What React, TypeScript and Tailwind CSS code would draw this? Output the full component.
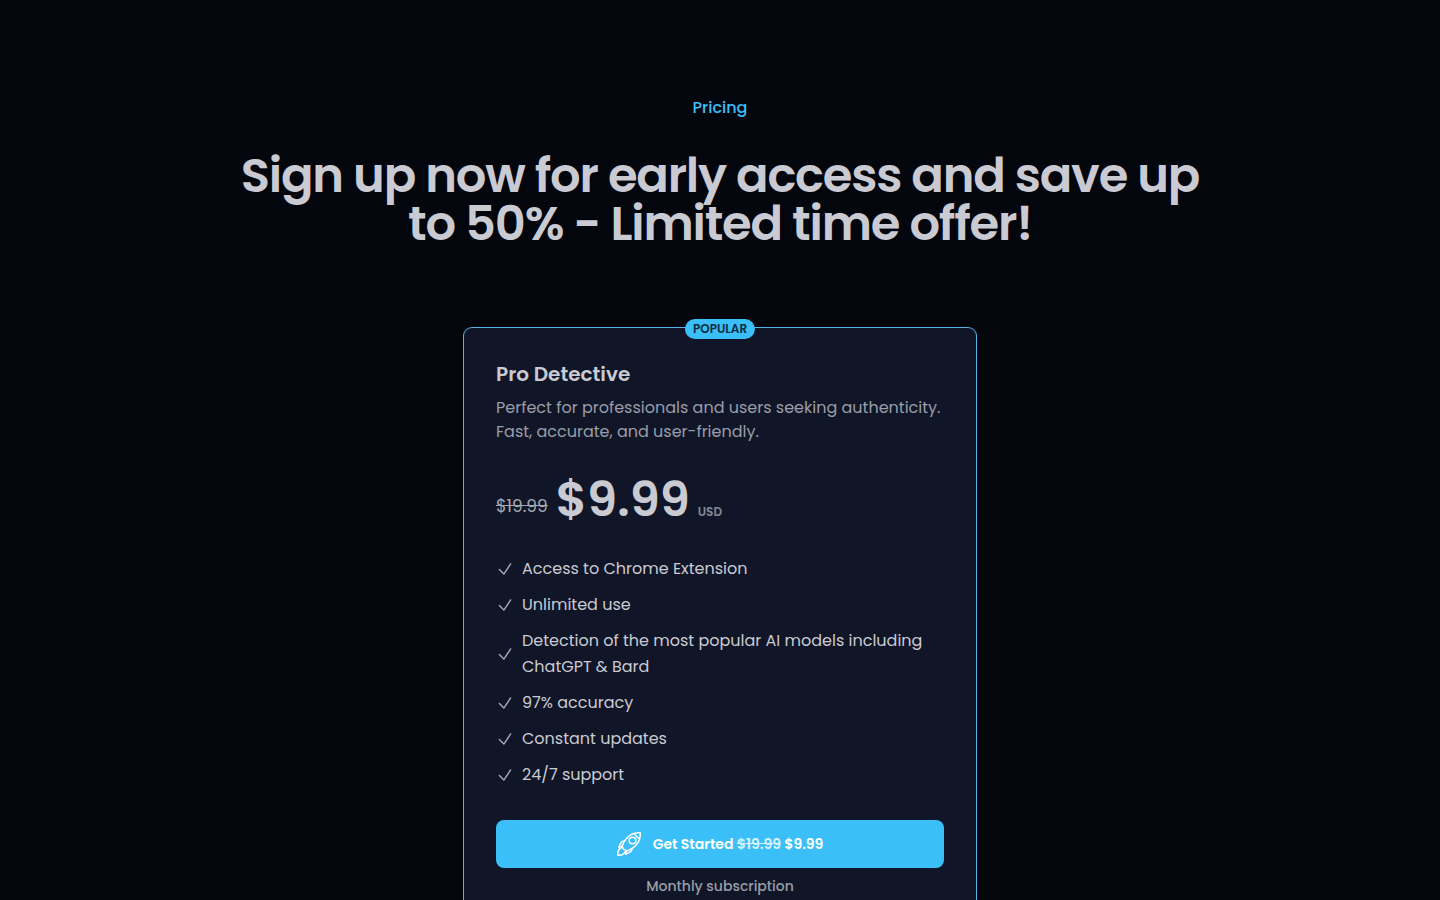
const features: string[] = [
  "Access to Chrome Extension",
  "Unlimited use",
  "Detection of the most popular AI models including ChatGPT & Bard",
  "97% accuracy",
  "Constant updates",
  "24/7 support",
];

function CheckIcon() {
  return (
    <svg
      className="size-[18px] shrink-0 text-[#a5a8b1]"
      viewBox="0 0 24 24"
      fill="none"
      stroke="currentColor"
      strokeWidth="1.9"
      strokeLinecap="round"
      strokeLinejoin="round"
      aria-hidden="true"
    >
      <path d="M4.500 12.750l6 6 9-13.500" />
    </svg>
  );
}

function RocketIcon() {
  return (
    <svg
      className="size-6 shrink-0"
      viewBox="0 0 24 24"
      fill="none"
      stroke="currentColor"
      strokeWidth="1.5"
      strokeLinecap="round"
      strokeLinejoin="round"
      aria-hidden="true"
    >
      <path d="M23.2.8C18.2.4 13.8 2 10.300 5.500C7.800 8 6 11 5.100 14.200C5.600 16.400 7.600 18.400 9.800 18.900C13 18 16 16.200 18.500 13.700C22 10.200 23.600 5.800 23.200.8Z" />
      <path d="M17.300 1.700C18.600 4 20 5.400 22.300 6.700" />
      <circle cx="15.500" cy="8.500" r="3.300" />
      <path d="M7.800 8.500L4.300 10.200L1.700 15.400L5.400 14.200" />
      <path d="M15.500 16.200L13.800 19.700L8.600 22.300L9.800 18.600" />
      <path d="M4.300 15.800C1.500 16.800.6 19.400.8 23.200C4.600 23.400 7.200 22.500 8.200 19.700" />
    </svg>
  );
}

export default function App() {
  return (
    <main className="min-h-screen bg-[#04060e] font-['Poppins','Inter',sans-serif] text-[#cacad2]">
      <section id="pricing" className="mx-auto max-w-5xl px-6 py-24">
        <div className="mb-20 flex flex-col gap-8 text-center">
          <p className="text-base font-medium text-[#3abff8]">Pricing</p>
          <h2 className="text-5xl leading-12 font-semibold tracking-tight">
            Sign up now for early access and save up to 50% - Limited time offer!
          </h2>
        </div>

        <article className="relative mx-auto max-w-lg rounded-lg bg-[#101627] p-8 ring-1 ring-[#55b5e6]">
          <span className="absolute top-0 left-1/2 flex h-5 -translate-x-1/2 -translate-y-[9px] items-center rounded-full bg-[#3abff8] px-2 text-xs font-semibold text-[#0b2e3f]">
            POPULAR
          </span>

          <h3 className="text-xl leading-7 font-semibold">Pro Detective</h3>
          <p className="mt-2 text-base leading-6 text-[#9a9da7]">
            Perfect for professionals and users seeking authenticity. Fast, accurate, and
            user-friendly.
          </p>

          <div className="mt-8 flex items-end gap-2">
            <s className="mb-1 text-[17px] leading-7 text-[#a5a8b1]">$19.99</s>
            <span className="text-5xl leading-12 font-semibold">$9.99</span>
            <span className="mb-1 text-xs leading-4 font-semibold text-[#858892]">USD</span>
          </div>

          <ul className="mt-8 flex flex-col gap-[10px] text-base leading-[26px]">
            {features.map((feature) => (
              <li key={feature} className="flex items-center gap-2">
                <CheckIcon />
                <span>{feature}</span>
              </li>
            ))}
          </ul>

          <button
            type="button"
            className="mt-8 flex h-12 w-full items-center justify-center gap-3 rounded-lg bg-[#3abff8] text-sm font-semibold text-white"
          >
            <RocketIcon />
            <span>
              Get Started <s className="opacity-80">$19.99</s> $9.99
            </span>
          </button>
          <p className="mt-2 text-center text-sm leading-5 font-medium text-[#9a9da7]">
            Monthly subscription
          </p>
        </article>
      </section>
    </main>
  );
}
